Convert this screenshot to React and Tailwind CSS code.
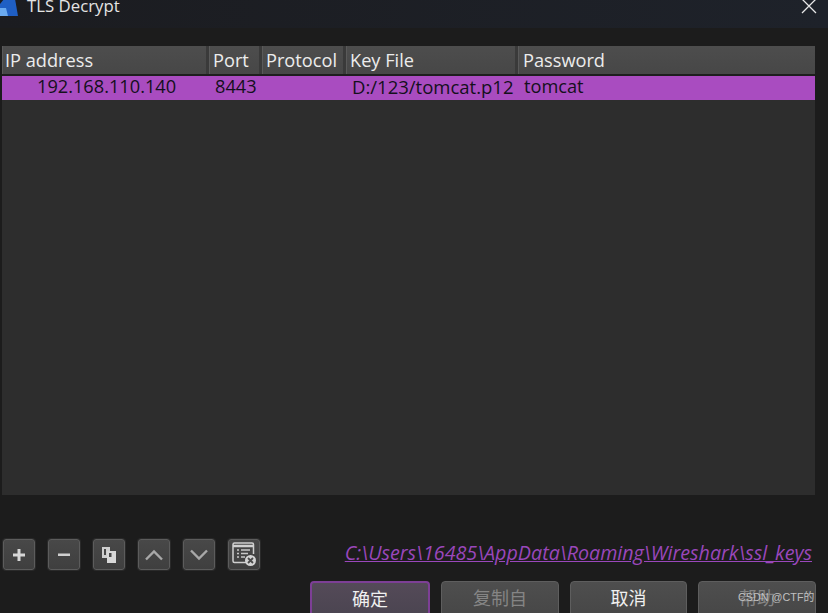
const font = { fontFamily: '"Open Sans", "Noto Sans CJK SC", sans-serif' };

function Head({ w, pad = "pl-[3px]", children }) {
  return (
    <div className={`${w} ${pad} h-full shrink-0 flex items-center pt-[2px] border-r-[3px] border-r-[#3a3a3a] border-l border-l-[#5a5a5a] whitespace-nowrap`}>
      {children}
    </div>
  );
}

function Tool({ children }) {
  return (
    <div className="w-[32px] h-[31px] rounded-[3px] border border-[#5c5c5c] bg-gradient-to-b from-[#484848] to-[#3f3f3f] flex items-center justify-center shadow-[0_0_0_1px_#2a2a2a]">
      {children}
    </div>
  );
}

function Btn({ w, className = "", children }) {
  return (
    <div className={`${w} h-[40px] shrink-0 rounded-[4px] border flex items-start justify-center pt-[3px] text-[18px] leading-[26px] ${className}`}>
      {children}
    </div>
  );
}

export default function App() {
  return (
    <div className="w-[828px] h-[613px] overflow-hidden bg-[#1c1c1c] flex flex-col relative text-[#e8e8e8]" style={font}>
      <div className="h-[28px] shrink-0 bg-gradient-to-r from-[#1b1c20] to-[#1e222a] flex items-start justify-between">
        <div className="flex items-start -mt-[7px]">
          <svg width="18" height="24" viewBox="0 0 18 24">
            <path d="M0 11 L9 0 L14 0 L18 23 L0 23 Z" fill="#1f5fc4" />
            <path d="M0 15 L6 15 L8 23 L0 23 Z" fill="#6aaaf0" />
          </svg>
          <span className="ml-[9px] text-[16.800px] leading-[26px] text-[#e4e4e4]">TLS Decrypt</span>
        </div>
        <svg width="16" height="16" viewBox="0 0 16 16" className="mr-[11px] -mt-[1px]" stroke="#e8e8e8" strokeWidth="1.300" fill="none">
          <path d="M1 0 L15 14 M15 0 L1 14" />
        </svg>
      </div>

      <div className="mt-[18px] ml-[2px] w-[813px] h-[449px] bg-[#2d2d2d] flex flex-col shrink-0">
        <div className="h-[28px] shrink-0 flex bg-gradient-to-b from-[#4d4d4d] to-[#474747] text-[18.200px] text-[#ececec]">
          <Head w="w-[207px]" pad="pl-[2px]">IP address</Head>
          <Head w="w-[53px]">Port</Head>
          <Head w="w-[84px]">Protocol</Head>
          <Head w="w-[172px]">Key File</Head>
          <div className="flex-1 flex items-center pt-[2px] pl-[4px] border-l border-l-[#5a5a5a]">Password</div>
        </div>
        <div className="h-[2px] shrink-0 bg-[#1e1e1e]" />
        <div className="h-[24px] shrink-0 flex items-center bg-[#a94cc0] text-[18.200px] text-[#14101c] whitespace-nowrap pb-[2px]">
          <div className="w-[213px] pl-[35px] shrink-0">192.168.110.140</div>
          <div className="w-[137px] shrink-0">8443</div>
          <div className="w-[172px] shrink-0 text-[18.500px]">D:/123/tomcat.p12</div>
          <div>tomcat</div>
        </div>
      </div>

      <div className="mt-[44px] ml-[3px] h-[31px] shrink-0 flex items-center justify-between w-[809px]">
        <div className="flex gap-[13px]">
          <Tool>
            <svg width="14" height="14" viewBox="0 0 14 14" fill="#d6d6d6"><path d="M5.500 1h3v4.500H13v3H8.500V13h-3V8.500H1v-3h4.500z" /></svg>
          </Tool>
          <Tool>
            <svg width="14" height="14" viewBox="0 0 14 14" fill="#cfcfcf"><rect x="1" y="5.500" width="12" height="2.500" /></svg>
          </Tool>
          <Tool>
            <svg width="16" height="16" viewBox="0 0 16 16">
              <path d="M1 0h8v4H6v7H1z" fill="#cfcfcf" />
              <path d="M3 2h2v6H3z" fill="#484848" />
              <path d="M6 4h9v12H6z" fill="#d8d8d8" />
              <path d="M8 6h2.500v4H8z" fill="#484848" />
            </svg>
          </Tool>
          <Tool>
            <svg width="20" height="12" viewBox="0 0 20 12" fill="none" stroke="#a8a8a8" strokeWidth="2.400"><path d="M2 10.500 L10 2.500 L18 10.500" /></svg>
          </Tool>
          <Tool>
            <svg width="20" height="12" viewBox="0 0 20 12" fill="none" stroke="#a8a8a8" strokeWidth="2.400"><path d="M2 1.500 L10 9.500 L18 1.500" /></svg>
          </Tool>
          <Tool>
            <svg width="26" height="26" viewBox="0 0 26 26" fill="none" className="-mt-[2px]">
              <path d="M2 3.500 Q2 2 3.500 2 H21 Q22.500 2 22.500 3.500 V13 M16 21.500 H3.500 Q2 21.500 2 20 V3.500" stroke="#d0d0d0" strokeWidth="1.500" />
              <path d="M2 5 H22.500" stroke="#d0d0d0" strokeWidth="2.500" />
              <path d="M6 9h2M10 9h9M6 12.500h2M10 12.500h7M6 16h2M10 16h4" stroke="#c8c8c8" strokeWidth="1.300" />
              <circle cx="19.500" cy="19.500" r="5.500" fill="#d4d4d4" />
              <path d="M17 17 L22 22 M22 17 L17 22" stroke="#4a4a4a" strokeWidth="1.800" />
            </svg>
          </Tool>
        </div>
        <div className="italic underline text-[19.700px] leading-[26px] text-[#9a47bb] whitespace-nowrap -mt-[3px]">C:\Users\16485\AppData\Roaming\Wireshark\ssl_keys</div>
      </div>

      <div className="mt-[11px] ml-[310px] flex gap-[11px]">
        <Btn w="w-[120px]" className="border-2 border-[#7d3f96] bg-gradient-to-b from-[#544a58] to-[#4a4450] text-[#f0f0f0]">确定</Btn>
        <Btn w="w-[118px]" className="border-[#5e5e5e] bg-gradient-to-b from-[#4e4e4e] to-[#464646] text-[#858585]">复制自</Btn>
        <Btn w="w-[117px]" className="border-[#5e5e5e] bg-gradient-to-b from-[#4e4e4e] to-[#464646] text-[#f0f0f0]">取消</Btn>
        <Btn w="w-[118px]" className="border-[#5e5e5e] bg-gradient-to-b from-[#4e4e4e] to-[#464646] text-[#858585]">帮助</Btn>
      </div>

      <div className="absolute left-[738px] top-[590px] text-[10.800px] leading-[14px] text-[#c0c0c0] whitespace-nowrap" style={{ fontFamily: '"Liberation Sans", "Noto Sans CJK SC", sans-serif' }}>CSDN @CTF的</div>
    </div>
  );
}
